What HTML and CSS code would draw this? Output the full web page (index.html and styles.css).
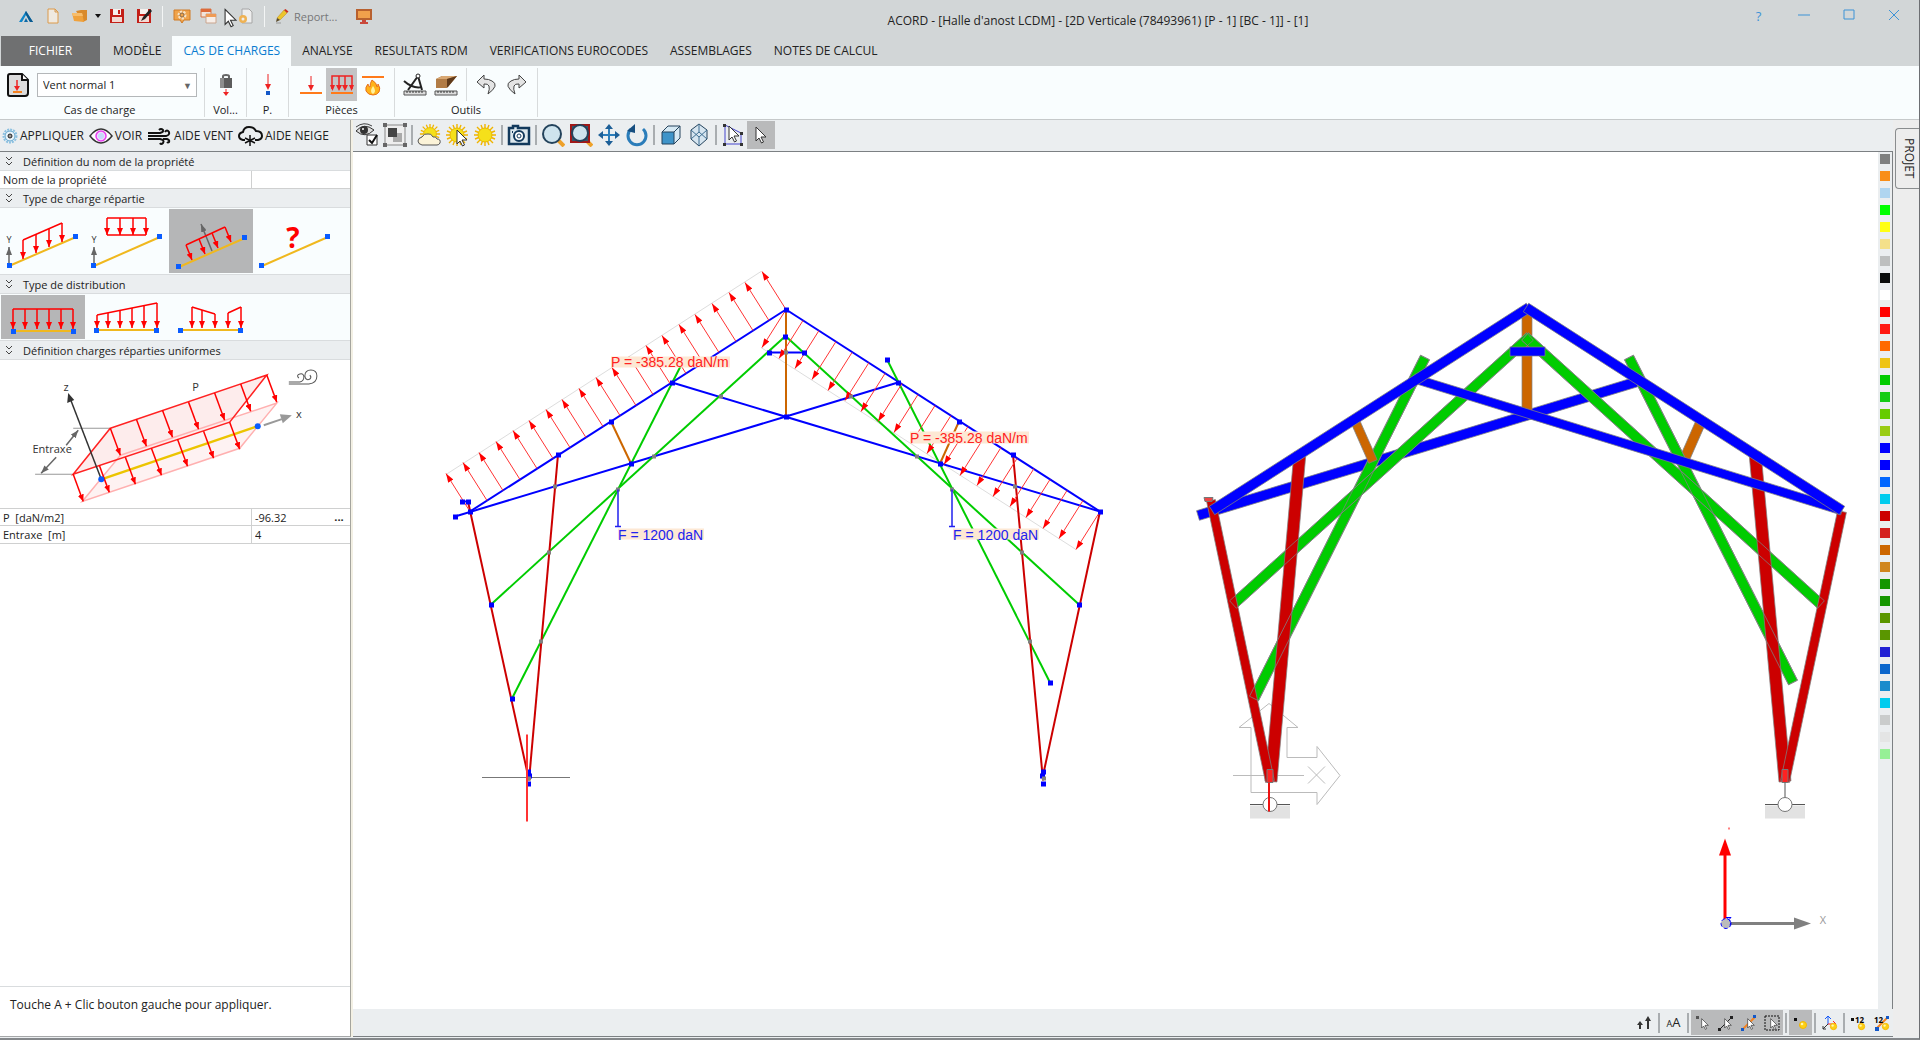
FILE: index.html
```html
<!DOCTYPE html>
<html lang="fr">
<head>
    <meta charset="UTF-8">
    <meta name="viewport" content="width=device-width, initial-scale=1.0">
    <title>ACORD - [Halle d'anost LCDM]</title>
    <link rel="stylesheet" href="styles.css">
</head>
<body>
    <!-- Shared markers and symbols -->
    <svg class="defs" aria-hidden="true">
        <defs>
            <marker id="red-head" viewBox="0 0 7 6" refX="7" refY="3" markerWidth="7" markerHeight="6" markerUnits="userSpaceOnUse" orient="auto"><path d="M0 0L7 3L0 6z" fill="#f00"/></marker>
            <marker id="gray-head" viewBox="0 0 8 6" refX="8" refY="3" markerWidth="8" markerHeight="6" markerUnits="userSpaceOnUse" orient="auto"><path d="M0 0L8 3L0 6z" fill="#666"/></marker>
            <marker id="load-head" viewBox="0 0 9 6" refX="9" refY="3" markerWidth="9" markerHeight="6" markerUnits="userSpaceOnUse" orient="auto"><path d="M0 0L9 3L0 6z" fill="#f00"/></marker>
            <symbol id="sun" viewBox="0 0 24 24">
                <path d="M12 1v22M1 12h22M4 4l16 16M20 4L4 20M8 2l8 20M16 2L8 22M2 8l20 8M2 16l20-8" stroke="#f0b400" stroke-width="1.4"/>
                <circle cx="12" cy="12" r="7" fill="#f5e01a" stroke="#eab800"/>
            </symbol>
            <symbol id="cursor" viewBox="0 0 12 18">
                <path d="M1 1v14l3-3 2.500 5 2-1-2.500-5H11z" fill="#fff" stroke="#333"/>
            </symbol>
            <symbol id="bulb" viewBox="0 0 10 10">
                <circle cx="5" cy="5" r="3.500" fill="#fdd017" stroke="#f5b800"/>
                <circle cx="4" cy="4" r="1.300" fill="#fff6b0"/>
            </symbol>
        </defs>
    </svg>

    <div class="window">
        <header class="titlebar">
            <div class="quick-access">
                <span class="app-logo"><svg width="16" height="16" viewBox="0 0 16 16"><path d="M1 14L8 3l7 11h-3L8 7l-4 7z" fill="#0f86c9"/><path d="M6 14l2-4 2 4z" fill="#0f6ba8"/><path d="M8 3l7 11h-3L7 5z" fill="#0b5a8f"/></svg></span>
                <button type="button" class="qa" aria-label="Nouveau"><svg width="16" height="18" viewBox="0 0 16 18"><path d="M3 2h7l3 3v11H3zM10 2v3h3" fill="#efe9e0" stroke="#dc9a4a"/></svg></button>
                <button type="button" class="qa" aria-label="Ouvrir"><svg width="18" height="16" viewBox="0 0 18 16"><path d="M5 3l5-1 6 0v10l-4 2z" fill="#d98a2b"/><path d="M1 5h10l2 9L3 13z" fill="#f0a23c"/><path d="M1 5h10l1 3H2z" fill="#f7bd6b"/></svg></button>
                <button type="button" class="qa narrow" aria-label="Fichiers récents"><svg width="6" height="4" viewBox="0 0 6 4"><path d="M0 0h6L3 4z" fill="#111"/></svg></button>
                <button type="button" class="qa" aria-label="Enregistrer"><svg width="16" height="16" viewBox="0 0 16 16"><path d="M1 1h14v14H1z" fill="#c32018"/><path d="M4 1h8v6H4z" fill="#f6f1ee"/><path d="M9 2h2v4H9z" fill="#c32018"/><path d="M3 9h10v5H3z" fill="#f3d9d2"/></svg></button>
                <button type="button" class="qa" aria-label="Enregistrer sous"><svg width="16" height="16" viewBox="0 0 16 16"><path d="M1 1h14v14H1z" fill="#c32018"/><path d="M4 1h8v5H4z" fill="#f6f1ee"/><path d="M3 8h10v6H3z" fill="#f3d9d2"/><path d="M14 1l2 2-7 8-4 2 2-4z" fill="#222"/></svg></button>
                <span class="qa-sep"></span>
                <button type="button" class="qa" aria-label="Options"><svg width="18" height="16" viewBox="0 0 18 16"><path d="M1 2h16v10h-6l-2 3-2-3H1z" fill="#f0a34a" stroke="#cf7a26"/><circle cx="9" cy="7" r="3" fill="none" stroke="#f6e3c8" stroke-width="3" stroke-dasharray="2 1"/><circle cx="9" cy="7" r="2" fill="#f0a34a" stroke="#8a6a48"/></svg></button>
                <button type="button" class="qa" aria-label="Fenêtres"><svg width="18" height="16" viewBox="0 0 18 16"><path d="M1 1h10v8H1z" fill="#f2e3da" stroke="#d77746"/><path d="M1 1h10v3H1z" fill="#dd6a3b"/><path d="M6 6h10v9H6z" fill="#f7eee8" stroke="#c9a58f"/><path d="M6 6h10v3H6z" fill="#ef9b55"/></svg></button>
                <button type="button" class="qa page-button" aria-label="Page"><svg width="16" height="18" viewBox="0 0 16 18"><path d="M4 2h7l3 3v11H4z" fill="#eee" stroke="#a6a6a6"/><circle cx="5" cy="12" r="4" fill="#efb253"/><circle cx="5" cy="12" r="1.500" fill="#eee"/></svg></button>
                <span class="qa-sep"></span>
                <button type="button" class="qa report"><svg width="16" height="16" viewBox="0 0 16 16"><path d="M3 10l7-8 3 3-7 7z" fill="#ecc52c" stroke="#b88a1c" stroke-width=".5"/><path d="M10 2l1.500-1 3 2.500L13 5z" fill="#cc3020"/><path d="M3 10l-1 4 4-2z" fill="#5a4a2a"/><path d="M2 15h5" stroke="#999"/></svg>Report...</button>
                <button type="button" class="qa" aria-label="Écran"><svg width="18" height="16" viewBox="0 0 18 16"><path d="M1 1h16v11H1z" fill="#b8612f"/><path d="M3 3h12v7H3z" fill="#f0a04c"/><path d="M7 12h4v2h2v2H5v-2h2z" fill="#c9483a"/></svg></button>
                <svg class="mouse" width="13" height="20" viewBox="0 0 12 18"><use href="#cursor"/></svg>
            </div>
            <h1 class="window-title">ACORD - [Halle d'anost LCDM] - [2D Verticale (78493961) [P - 1] [BC - 1]] - [1]</h1>
            <div class="window-controls">
                <button type="button" aria-label="Aide">?</button>
                <button type="button" aria-label="Réduire"><svg width="12" height="12" viewBox="0 0 12 12"><path d="M0 6h12" stroke="#3d93d6"/></svg></button>
                <button type="button" aria-label="Agrandir"><svg width="12" height="12" viewBox="0 0 12 12"><path d="M1 1h10v9H1z" fill="none" stroke="#3d93d6"/></svg></button>
                <button type="button" aria-label="Fermer"><svg width="12" height="12" viewBox="0 0 12 12"><path d="M1 1l10 10M11 1L1 11" stroke="#3d93d6"/></svg></button>
            </div>
        </header>

        <nav class="tabs">
            <button type="button" class="tab file">FICHIER</button>
            <button type="button" class="tab">MODÈLE</button>
            <button type="button" class="tab active">CAS DE CHARGES</button>
            <button type="button" class="tab">ANALYSE</button>
            <button type="button" class="tab">RESULTATS RDM</button>
            <button type="button" class="tab">VERIFICATIONS EUROCODES</button>
            <button type="button" class="tab">ASSEMBLAGES</button>
            <button type="button" class="tab">NOTES DE CALCUL</button>
        </nav>

        <div class="ribbon">
            <section class="ribbon-group load-case">
                <div class="ribbon-tools">
                    <button type="button" class="tool" aria-label="Cas de charge"><svg width="22" height="24" viewBox="0 0 22 24"><path d="M3 1h12l6 6v13q0 3-3 3H3q-2 0-2-2V3q0-2 2-2z" fill="#dcdcdc" stroke="#111" stroke-width="2"/><path d="M15 1v6h6" fill="#fff" stroke="#111" stroke-width="2"/><path d="M10 7v8" stroke="#e22" stroke-width="1.500"/><path d="M7 13h6l-3 5z" fill="#e22"/><path d="M6 19h9" stroke="#f58220" stroke-width="2"/></svg></button>
                    <span class="select-box"><select aria-label="Cas de charge"><option>Vent normal 1</option></select></span>
                </div>
                <h2>Cas de charge</h2>
            </section>
            <section class="ribbon-group small">
                <div class="ribbon-tools">
                    <button type="button" class="tool" aria-label="Volumique"><svg width="16" height="24" viewBox="0 0 16 24"><path d="M5 6V3q0-1 3-1t3 1v3" fill="none" stroke="#666" stroke-width="2"/><path d="M2 5h12v10H2z" fill="#5c5c5c"/><path d="M2 5h4v10H2z" fill="#8d8d8d"/><path d="M8 16v4" stroke="#e22"/><path d="M5 19h6l-3 4z" fill="#e22"/></svg></button>
                </div>
                <h2>Vol...</h2>
            </section>
            <section class="ribbon-group small">
                <div class="ribbon-tools">
                    <button type="button" class="tool" aria-label="Ponctuelle"><svg width="10" height="24" viewBox="0 0 10 24"><path d="M5 1v12" stroke="#e22"/><path d="M2 11h6l-3 6z" fill="#e22"/><path d="M3 18h4v4H3z" fill="#1458c8"/></svg></button>
                </div>
                <h2>P.</h2>
            </section>
            <section class="ribbon-group pieces">
                <div class="ribbon-tools">
                    <button type="button" class="tool" aria-label="Charge ponctuelle sur pièce"><svg width="24" height="24" viewBox="0 0 24 24"><path d="M12 3v12" stroke="#e22"/><path d="M9 12h6l-3 6z" fill="#e22"/><path d="M1 20h22" stroke="#ff7a1a" stroke-width="2"/></svg></button>
                    <button type="button" class="tool active" aria-label="Charge répartie"><svg width="24" height="24" viewBox="0 0 24 24"><path d="M2 16V3h20v13M9 3v13M15 3v13" fill="none" stroke="#e22" stroke-width="1.500"/><path d="M0 12h5l-2.500 6zM6 12h6l-3 6zM12 12h6l-3 6zM19 12h5l-2.500 6z" fill="#e22"/><path d="M1 20h22" stroke="#ff7a1a" stroke-width="2"/></svg></button>
                    <button type="button" class="tool" aria-label="Incendie"><svg width="24" height="24" viewBox="0 0 24 24"><path d="M1 4h22" stroke="#ff7a1a" stroke-width="2"/><path d="M11 7q5 3 5 7 1 0 1-3 3 4 1 8-2 3-6 3-5 0-7-4-1-4 2-7 0 3 2 3 0-4 2-7z" fill="#ffb31a" stroke="#e8701a"/><path d="M12 13q4 5 0 8-4-2 0-8z" fill="#fff2a0"/></svg></button>
                </div>
                <h2>Pièces</h2>
            </section>
            <section class="ribbon-group tools">
                <div class="ribbon-tools">
                    <button type="button" class="tool" aria-label="Mesurer"><svg width="24" height="24" viewBox="0 0 24 24"><path d="M15 3L5 17M15 3l4 14M1 8q9 8 18 6" fill="none" stroke="#222" stroke-width="2"/><circle cx="15" cy="3" r="2" fill="#fff" stroke="#222"/><path d="M1 18h22v4H1z" fill="#ddd" stroke="#555"/><path d="M4 18v2M7 18v2M10 18v2M13 18v2M16 18v2M19 18v2" stroke="#333"/></svg></button>
                    <button type="button" class="tool" aria-label="Dimensions bois"><svg width="24" height="24" viewBox="0 0 24 24"><path d="M2 6l6-3h15l-9 11H2z" fill="#9c6a3a"/><path d="M2 6h11v9H2z" fill="#b27c46"/><path d="M2 6l6-3h15l-10 3z" fill="#d9a873"/><path d="M13 6l10-3-10 12z" fill="#5f3a1b"/><path d="M1 18h22v4H1z" fill="#ddd" stroke="#555"/><path d="M4 18v2M7 18v2M10 18v2M13 18v2M16 18v2M19 18v2" stroke="#333"/></svg></button>
                    <span class="tool-sep"></span>
                    <button type="button" class="tool" aria-label="Annuler"><svg width="22" height="24" viewBox="0 0 22 24"><path d="M9 2L2 9l7 6v-4q8-1 4 10 12-9 4-13-3-2-8-2z" fill="#e4e4e4" stroke="#444"/></svg></button>
                    <button type="button" class="tool" aria-label="Rétablir"><svg width="22" height="24" viewBox="0 0 22 24"><path d="M13 2l7 7-7 6v-4q-8-1-4 10-12-9-4-13 3-2 8-2z" fill="#e4e4e4" stroke="#444"/></svg></button>
                </div>
                <h2>Outils</h2>
            </section>
        </div>

        <div class="workspace">
            <aside class="sidebar">
                <div class="action-bar">
                    <button type="button"><svg width="16" height="16" viewBox="0 0 16 16"><circle cx="8" cy="8" r="6.500" fill="#eaf4fa" stroke="#8cc0e0" stroke-width="2" stroke-dasharray="2 1"/><circle cx="8" cy="8" r="5" fill="none" stroke="#5ea3cc"/><circle cx="8" cy="8" r="2" fill="#999" stroke="#222"/></svg>APPLIQUER</button>
                    <button type="button"><svg width="24" height="16" viewBox="0 0 24 16"><path d="M1 8q11-14 22 0-11 14-22 0z" fill="#fff" stroke="#333" stroke-width="1.500"/><circle cx="12" cy="8" r="5" fill="#f3d9fb" stroke="#e83ef0" stroke-width="1.500"/><circle cx="12" cy="8" r="3" fill="#c5d9fb"/></svg>VOIR</button>
                    <button type="button"><svg width="25" height="18" viewBox="0 0 25 18"><path d="M1 6h12q4-1 3-3-2-2-4 0M1 9h18q4-1 3-4-2-3-4 0M1 12h12q5 1 3 4-2 2-3 0M16 12h4q3 1 2 3-1 1-2 0" fill="none" stroke="#111" stroke-width="2"/></svg>AIDE VENT</button>
                    <button type="button"><svg width="25" height="20" viewBox="0 0 25 20"><path d="M7 14H5q-4-1-4-4t4-4q1-5 6-5t7 4q6 0 6 5 0 3-4 4h-3" fill="none" stroke="#111" stroke-width="2"/><path d="M12 9v11M7 12l10 5M17 12L7 17" stroke="#111" stroke-width="1.500"/></svg>AIDE NEIGE</button>
                </div>

                <details open>
                    <summary><svg width="8" height="10" viewBox="0 0 8 10"><path d="M1 1l3 3 3-3M1 6l3 3 3-3" fill="none" stroke="#444"/></svg>Définition du nom de la propriété</summary>
                    <div class="prop-row">
                        <label for="prop-name">Nom de la propriété</label>
                        <input type="text" id="prop-name">
                    </div>
                </details>

                <details open>
                    <summary><svg width="8" height="10" viewBox="0 0 8 10"><path d="M1 1l3 3 3-3M1 6l3 3 3-3" fill="none" stroke="#444"/></svg>Type de charge répartie</summary>
                    <div class="tiles">
                        <button type="button" class="tile" aria-label="Charge verticale suivant la pièce"><svg viewBox="0 0 84 64">
                            <path d="M8 57l67-29" class="beam"/>
                            <path d="M8 54V38" class="axis" marker-end="url(#gray-head)"/><text x="8" y="34" class="axis-name">Y</text>
                            <path d="M22 31l39-17" class="load"/>
                            <path d="M22 31v19" class="load arrow"/><path d="M35 25v19" class="load arrow"/><path d="M48 20v18" class="load arrow"/><path d="M61 14v19" class="load arrow"/>
                            <path d="M6 54h5v5H6zM72 25h5v5h-5z" class="node"/></svg></button>
                        <button type="button" class="tile" aria-label="Charge verticale projetée"><svg viewBox="0 0 84 64">
                            <path d="M9 57l66-29" class="beam"/>
                            <path d="M9 54V38" class="axis" marker-end="url(#gray-head)"/><text x="9" y="34" class="axis-name">Y</text>
                            <path d="M22 9h39M22 26h39" class="load"/>
                            <path d="M22 9v17" class="load arrow"/><path d="M35 9v17" class="load arrow"/><path d="M48 9v17" class="load arrow"/><path d="M61 9v17" class="load arrow"/>
                            <path d="M6 54h5v5H6zM72 25h5v5h-5z" class="node"/></svg></button>
                        <button type="button" class="tile active" aria-label="Charge perpendiculaire"><svg viewBox="0 0 84 64">
                            <path d="M10 58l66-29" class="beam"/>
                            <path d="M43 42L32 15" class="axis" marker-end="url(#gray-head)"/>
                            <path d="M17 36l39-18" class="load"/>
                            <path d="M17 36l6 15" class="load arrow"/><path d="M30 30l6 15" class="load arrow"/><path d="M43 24l6 15" class="load arrow"/><path d="M56 18l6 15" class="load arrow"/>
                            <path d="M7 55h5v5H7zM73 26h5v5h-5z" class="node"/></svg></button>
                        <button type="button" class="tile" aria-label="Charge quelconque"><svg viewBox="0 0 84 64">
                            <path d="M9 57l66-29" class="beam"/>
                            <text x="40" y="39" class="question">?</text>
                            <path d="M6 54h5v5H6zM72 25h5v5h-5z" class="node"/></svg></button>
                    </div>
                </details>

                <details open>
                    <summary><svg width="8" height="10" viewBox="0 0 8 10"><path d="M1 1l3 3 3-3M1 6l3 3 3-3" fill="none" stroke="#444"/></svg>Type de distribution</summary>
                    <div class="tiles">
                        <button type="button" class="tile low active" aria-label="Uniforme"><svg viewBox="0 0 84 44">
                            <path d="M12 36h60" class="beam"/><path d="M12 14h60" class="load"/>
                            <path d="M12 14v20" class="load arrow"/><path d="M24 14v20" class="load arrow"/><path d="M36 14v20" class="load arrow"/><path d="M48 14v20" class="load arrow"/><path d="M60 14v20" class="load arrow"/><path d="M72 14v20" class="load arrow"/>
                            <path d="M10 34h5v5h-5zM70 34h5v5h-5z" class="node"/></svg></button>
                        <button type="button" class="tile low" aria-label="Linéaire"><svg viewBox="0 0 84 44">
                            <path d="M12 35h60" class="beam"/><path d="M12 20L72 8" class="load"/>
                            <path d="M12 20v13" class="load arrow"/><path d="M23 18v15" class="load arrow"/><path d="M35 15v18" class="load arrow"/><path d="M47 13v20" class="load arrow"/><path d="M59 11v22" class="load arrow"/><path d="M72 8v25" class="load arrow"/>
                            <path d="M9 33h5v5H9zM69 33h5v5h-5z" class="node"/></svg></button>
                        <button type="button" class="tile low" aria-label="Par morceaux"><svg viewBox="0 0 84 44">
                            <path d="M12 35h60" class="beam"/><path d="M23 12l23 7M59 18l13-6" class="load"/>
                            <path d="M23 12v21" class="load arrow"/><path d="M33 15v18" class="load arrow"/><path d="M46 19v14" class="load arrow"/><path d="M59 18v15" class="load arrow"/><path d="M72 12v21" class="load arrow"/>
                            <path d="M9 33h5v5H9zM69 33h5v5h-5z" class="node"/></svg></button>
                    </div>
                </details>

                <details open>
                    <summary><svg width="8" height="10" viewBox="0 0 8 10"><path d="M1 1l3 3 3-3M1 6l3 3 3-3" fill="none" stroke="#444"/></svg>Définition charges réparties uniformes</summary>
                    <svg class="load-diagram" viewBox="0 360 350 148">
                        <path d="M110 428L266 375L229 422L73 474z" fill="#fdecec"/>
                        <path d="M120 455L276 403L239 448L82 501z" fill="#fdecec" opacity=".7"/>
                        <path d="M120 455L276 403L239 448L82 501z" fill="none" stroke="#ffb0b0" stroke-width="1.500"/>
                        <path d="M101 479L257 426" stroke="#ecc400" stroke-width="2.500"/>
                        <path d="M35 474H73M73 428H110" stroke="#999"/>
                        <path d="M56 457L41 473" class="axis" marker-end="url(#gray-head)"/>
                        <path d="M66 445L78 430" class="axis" marker-end="url(#gray-head)"/>
                        <path d="M110 428L266 375L229 422L73 474z" fill="none" stroke="#f22" stroke-width="1.500"/>
                        <g id="diagram-arrows"></g>
                        <path d="M101 479L69 396" stroke="#333" stroke-width="1.500"/>
                        <path d="M68 393l-1 10 7-3z" fill="#333"/>
                        <path d="M263 425l18-6" stroke="#999" stroke-width="2"/>
                        <path d="M291 415l-12-1 3 9z" fill="#999"/>
                        <circle cx="101" cy="479" r="3" fill="#0a5cff"/>
                        <circle cx="257" cy="426" r="3" fill="#0a5cff"/>
                        <path d="M288 384h20q8-1 8-8 0-6-6-6t-6 6q1 5 5 3 2-2 0-4M288 382h11q4-1 4-5t-4-3-1 4" fill="none" stroke="#555"/>
                        <text x="66" y="391" class="diagram-text">z</text>
                        <text x="195" y="391" class="diagram-text">P</text>
                        <text x="298" y="418" class="diagram-text">x</text>
                        <text x="52" y="453" class="diagram-text">Entraxe</text>
                    </svg>
                    <div class="prop-row">
                        <label for="prop-load">P &nbsp;[daN/m2]</label>
                        <input type="text" id="prop-load" value="-96.32">
                        <button type="button" class="more" aria-label="Modifier P">...</button>
                    </div>
                    <div class="prop-row last">
                        <label for="prop-spacing">Entraxe &nbsp;[m]</label>
                        <input type="text" id="prop-spacing" value="4">
                    </div>
                </details>

                <p class="hint">Touche A + Clic bouton gauche pour appliquer.</p>
            </aside>

            <main class="view">
                <div class="view-bar">
                    <button type="button" class="vb" aria-label="Visibilité"><svg width="24" height="24" viewBox="0 0 24 24"><path d="M1 8q8-9 18-1-9 9-18 1z" fill="#ddd" stroke="#333"/><circle cx="9" cy="7" r="4" fill="#333"/><circle cx="8" cy="6" r="1" fill="#fff"/><path d="M1 4q8-6 16-1" fill="none" stroke="#444"/><path d="M12 12h10v10H12z" fill="#fff" stroke="#333"/><path d="M14 17l3 3 5-8" fill="none" stroke="#111" stroke-width="2"/></svg></button>
                    <button type="button" class="vb" aria-label="Sélection"><svg width="24" height="24" viewBox="0 0 24 24"><path d="M2 2h20v20H2z" fill="#eee" stroke="#888"/><path d="M10 10h9v9h-9z" fill="#aaa"/><path d="M5 5h9v9H5z" fill="#444"/><path d="M0 0h4v4H0zM20 0h4v4h-4zM0 20h4v4H0zM20 20h4v4h-4z" fill="#666"/></svg></button>
                    <span class="bar-sep"></span>
                    <button type="button" class="vb" aria-label="Ombrage"><svg width="24" height="24" viewBox="0 0 24 24"><use href="#sun" width="22" height="22" x="2"/><path d="M5 22q-4-1-4-4t4-4q2-4 6-3 3-1 5 3 3-1 4 2 4 0 3 4-1 2-3 2z" fill="#fbf3d8" stroke="#555"/></svg></button>
                    <button type="button" class="vb" aria-label="Lumière sélection"><svg width="24" height="24" viewBox="0 0 24 24"><use href="#sun" width="24" height="24"/><use href="#cursor" x="11" y="6" width="12" height="18"/></svg></button>
                    <button type="button" class="vb" aria-label="Lumière"><svg width="24" height="24" viewBox="0 0 24 24"><use href="#sun" width="24" height="24"/></svg></button>
                    <span class="bar-sep"></span>
                    <button type="button" class="vb" aria-label="Capture"><svg width="24" height="22" viewBox="0 0 24 22"><path d="M2 4h4V2h5v2h11v16H2z" fill="#dde8ee" stroke="#12395c" stroke-width="2.500"/><circle cx="12" cy="12" r="5" fill="#fff" stroke="#12395c" stroke-width="2"/><circle cx="12" cy="12" r="2" fill="none" stroke="#12395c"/><path d="M5 8h1" stroke="#12395c" stroke-width="2"/></svg></button>
                    <span class="bar-sep"></span>
                    <button type="button" class="vb" aria-label="Zoom"><svg width="24" height="24" viewBox="0 0 24 24"><path d="M17 17l6 6" stroke="#eea12a" stroke-width="4"/><circle cx="11" cy="11" r="9" fill="#cfe4ee" stroke="#24435c" stroke-width="2"/></svg></button>
                    <button type="button" class="vb" aria-label="Zoom fenêtre"><svg width="24" height="24" viewBox="0 0 24 24"><path d="M17 17l6 6" stroke="#eea12a" stroke-width="4"/><path d="M2 2h18v17H2z" fill="#35576c" stroke="#a01818" stroke-width="2"/><circle cx="11" cy="10" r="8" fill="#cfe4ee" stroke="#24435c" stroke-width="2"/></svg></button>
                    <button type="button" class="vb" aria-label="Déplacer"><svg width="24" height="24" viewBox="0 0 24 24"><path d="M12 3v18M3 12h18" stroke="#2b7dba" stroke-width="2"/><path d="M12 1l4 5H8zM12 23l4-5H8zM1 12l5-4v8zM23 12l-5-4v8z" fill="#1d5f97"/></svg></button>
                    <button type="button" class="vb" aria-label="Pivoter"><svg width="24" height="24" viewBox="0 0 24 24"><path d="M6 6A9 9 0 1 0 18 6" fill="none" stroke="#2b7dba" stroke-width="3"/><path d="M2 8L10 1v9z" fill="#164e80"/></svg></button>
                    <span class="bar-sep"></span>
                    <button type="button" class="vb" aria-label="Vue de face"><svg width="22" height="22" viewBox="0 0 22 22"><path d="M2 8l6-6h12v12l-6 6z" fill="#d6e9f4" stroke="#24435c"/><path d="M2 8h12v12H2z" fill="#3f94c9" stroke="#24435c"/><path d="M14 8l6-6" stroke="#24435c"/></svg></button>
                    <button type="button" class="vb" aria-label="Vue isométrique"><svg width="22" height="24" viewBox="0 0 22 24"><path d="M11 1l8 6v9l-8 7-8-7V7z" fill="#d6e5f0" stroke="#24435c"/><path d="M3 7l8 7 8-7M11 14v9M11 1v8M3 16l8-7 8 7" fill="none" stroke="#3f6f92"/></svg></button>
                    <span class="bar-sep"></span>
                    <button type="button" class="vb" aria-label="Sélection polygone"><svg width="24" height="24" viewBox="0 0 24 24"><path d="M4 2v19h16V10z" fill="none" stroke="#44c"/><path d="M2 1h3v3H2zM2 20h3v3H2zM19 20h3v3h-3zM19 9h3v3h-3z" fill="#333"/><use href="#cursor" x="7" y="2" width="12" height="18"/></svg></button>
                    <button type="button" class="vb active" aria-label="Pointeur"><svg width="12" height="18" viewBox="0 0 12 18"><use href="#cursor"/></svg></button>
                </div>

                <div class="stage">
                    <svg class="drawing" viewBox="353 152 1525 856">
                        <!-- Wire model with loads -->
                        <path d="M482 777h88" stroke="#777"/>
                        <path d="M446 474L761 271M761 347L1076 549" class="envelope"/>
                        <g id="wire"></g>
                        <g id="loads"></g>
                        <g id="nodes"></g>
                        <path d="M618 489v37M615 526h6M952 489v37M949 526h6" class="force"/>
                        <path d="M527 734v87" stroke="#f33" stroke-width="2"/>
                        <rect x="611" y="356" width="119" height="11" class="tag"/>
                        <text x="611" y="366" class="load-text">P = -385.28 daN/m</text>
                        <rect x="910" y="431" width="119" height="12" class="tag"/>
                        <text x="910" y="442" class="load-text">P = -385.28 daN/m</text>
                        <rect x="618" y="528" width="86" height="11" class="tag"/>
                        <text x="618" y="539" class="load-text blue">F = 1200 daN</text>
                        <rect x="953" y="528" width="86" height="11" class="tag"/>
                        <text x="953" y="539" class="load-text blue">F = 1200 daN</text>

                        <!-- Solid model -->
                        <path d="M1251 792V727H1239L1269 703L1298 727H1287V757H1317V746L1340 775L1317 804V792zM1233 775H1304M1308 766L1325 783M1325 766L1308 783" class="ucs"/>
                        <g id="solid"></g>
                        <path d="M1204 497h9l-1 4h-7z" fill="#e44" stroke="#777"/>
                        <path d="M1267 769h6v13h-6zM1782 769h6v13h-6z" fill="#f22" stroke="#777"/>
                        <path d="M1250 805h40v13h-40zM1765 805h40v13h-40z" fill="#e2e2e2"/>
                        <path d="M1250 804h40M1765 804h40M1785 782v16" stroke="#555"/>
                        <circle cx="1270" cy="804" r="7" class="hinge"/>
                        <circle cx="1785" cy="804" r="7" class="hinge"/>
                        <path d="M1269 782v29" stroke="#e11" stroke-width="2"/>

                        <!-- Axes -->
                        <path d="M1725 923V852" stroke="#f00" stroke-width="3"/>
                        <path d="M1725 838l6 17h-12z" fill="#f00"/>
                        <path d="M1729 827v2" stroke="#f00"/>
                        <path d="M1725 923h70" stroke="#808080" stroke-width="3"/>
                        <path d="M1811 923l-17-6v12z" fill="#808080"/>
                        <circle cx="1726" cy="923" r="5" fill="#bbb" stroke="#00f" stroke-dasharray="4 2"/>
                        <path d="M1726 917h5l-2 2q3 3 1 6" fill="none" stroke="#00f" stroke-width="1"/>
                        <text x="1823" y="923" class="axis-x">X</text>
                    </svg>
                    <div class="palette" id="palette"></div>
                </div>

                <footer class="status-bar">
                    <button type="button" class="sb" aria-label="Taille flèches"><svg width="16" height="16" viewBox="0 0 16 16"><path d="M3 14V9M11 14V4" stroke="#333" stroke-width="2"/><path d="M0 10h6L3 6zM8 6h6l-3-5z" fill="#333"/></svg></button>
                    <span class="bar-sep"></span>
                    <button type="button" class="sb letters" aria-label="Taille texte"><small>A</small>A</button>
                    <span class="bar-sep"></span>
                    <div class="sb-group">
                        <button type="button" class="sb active" aria-label="Sélection noeuds"><svg width="16" height="16" viewBox="0 0 16 16"><path d="M1 1h3v3H1z" fill="#555"/><use href="#cursor" x="6" y="3" width="8" height="12"/></svg></button>
                        <button type="button" class="sb active" aria-label="Sélection barres"><svg width="16" height="16" viewBox="0 0 16 16"><path d="M1 15L14 2" stroke="#222"/><path d="M0 13h3v3H0zM12 1h3v3h-3z" fill="#222"/><use href="#cursor" x="6" y="3" width="8" height="12"/></svg></button>
                        <button type="button" class="sb active" aria-label="Sélection pièces"><svg width="16" height="16" viewBox="0 0 16 16"><path d="M1 15L14 2" stroke="#f58220" stroke-width="2"/><path d="M0 13h3v3H0zM12 0h3v3h-3z" fill="#1458c8"/><use href="#cursor" x="6" y="3" width="8" height="12"/></svg></button>
                        <button type="button" class="sb active" aria-label="Sélection fenêtre"><svg width="16" height="16" viewBox="0 0 16 16"><path d="M1 1h14v14H1z" fill="none" stroke="#111" stroke-dasharray="2 1"/><use href="#cursor" x="6" y="3" width="8" height="12"/></svg></button>
                    </div>
                    <span class="bar-sep"></span>
                    <button type="button" class="sb active" aria-label="Afficher noeuds"><svg width="16" height="16" viewBox="0 0 16 16"><path d="M1 3h3v3H1z" fill="#111"/><use href="#bulb" x="5" y="5" width="10" height="10"/></svg></button>
                    <span class="bar-sep"></span>
                    <button type="button" class="sb" aria-label="Afficher repères"><svg width="16" height="16" viewBox="0 0 16 16"><path d="M6 9V1M3 4l3-3 3 3" fill="none" stroke="#1458f8"/><path d="M6 9h8M11 6l3 3-3 3" fill="none" stroke="#f22"/><path d="M6 9l-5 5v-3M1 14h3" fill="none" stroke="#333"/><use href="#bulb" x="7" y="7" width="9" height="9"/></svg></button>
                    <span class="bar-sep"></span>
                    <button type="button" class="sb" aria-label="Numéros noeuds"><svg width="16" height="16" viewBox="0 0 16 16"><path d="M0 3h3v3H0z" fill="#111"/><text x="4" y="8" class="num">12</text><use href="#bulb" x="6" y="7" width="9" height="9"/></svg></button>
                    <button type="button" class="sb" aria-label="Numéros barres"><svg width="16" height="16" viewBox="0 0 16 16"><path d="M2 14L14 2" stroke="#f58220" stroke-width="2"/><path d="M1 12h4v4H1zM12 1h3v3h-3z" fill="#1458c8"/><text x="0" y="8" class="num">12</text><use href="#bulb" x="7" y="7" width="9" height="9"/></svg></button>
                </footer>
            </main>

            <div class="side-strip">
                <button type="button" class="project-tab">PROJET</button>
            </div>
        </div>
    </div>
    <script src="script.js"></script>
</body>
</html>
```

FILE: styles.css
```css
* {
    margin: 0;
    padding: 0;
    box-sizing: border-box;
}

body {
    font-family: "Open Sans", "Noto Sans", sans-serif;
    font-size: 11px;
    color: #222;
    background-color: #ebeef0;
}

button,
select,
input {
    font: inherit;
    color: inherit;
    border: none;
    background: none;
}

.defs {
    position: absolute;
    width: 0;
    height: 0;
}

.window {
    display: flex;
    flex-direction: column;
    height: 100vh;
    padding-bottom: 1px;
    border-right: 1px solid #6d6f73;
    border-bottom: 2px solid #85888b;
    overflow: hidden;
}

/* Title bar */
.titlebar {
    display: grid;
    grid-template-columns: 400px 1fr 183px;
    height: 36px;
    padding-bottom: 4px;
    align-items: center;
    background-color: #d2d6d7;
}

.quick-access {
    position: relative;
    display: flex;
    align-items: center;
    padding-left: 12px;
}

.app-logo,
.qa {
    display: flex;
    align-items: center;
    justify-content: center;
    width: 27px;
    height: 24px;
}

.qa.narrow {
    width: 10px;
}

.qa-sep {
    width: 1px;
    height: 21px;
    margin: 0 5px;
    background-color: #f3f5f5;
}

.page-button {
    margin-left: 10px;
}

.qa.report {
    width: auto;
    gap: 4px;
    margin: 0 13px 0 4px;
    color: #777;
}

.mouse {
    position: absolute;
    left: 224px;
    top: 4px;
}

.window-title {
    font-size: 12px;
    font-weight: normal;
    text-align: center;
    padding: 8px 0 0 60px;
}

.window-controls {
    display: flex;
}

.window-controls button {
    width: 45px;
    height: 30px;
    font-size: 13px;
    color: #3d93d6;
}

/* Tabs */
.tabs {
    display: flex;
    height: 30px;
    padding-left: 1px;
    background-color: #d2d6d7;
}

.tab {
    padding: 0 11px 1px;
    font-size: 12px;
}

.tab.file {
    width: 99px;
    margin-right: 2px;
    color: #fff;
    background-color: #6f7071;
}

.tab.active {
    color: #0a7cd0;
    background-color: #f9fdfe;
}

/* Ribbon */
.ribbon {
    display: flex;
    height: 54px;
    background-color: #f9fdfe;
    border-bottom: 1px solid #c6c9ca;
}

.ribbon-group {
    display: flex;
    flex-direction: column;
    align-items: center;
    margin: 2px 0;
    border-right: 1px solid #d8dbdc;
}

.ribbon-group.load-case {
    width: 205px;
    padding-right: 5px;
}

.ribbon-group.small {
    width: 42px;
}

.ribbon-group.pieces {
    width: 106px;
}

.ribbon-group.tools {
    width: 143px;
}

.ribbon-group h2 {
    font-size: 11px;
    font-weight: normal;
    line-height: 18px;
}

.ribbon-tools {
    display: flex;
    align-items: center;
    height: 33px;
}

.tool {
    display: flex;
    align-items: center;
    justify-content: center;
    width: 31px;
    height: 33px;
}

.tool.active {
    background-color: #c3c4c5;
}

.tool-sep {
    width: 1px;
    height: 33px;
    margin: 0 4px;
    background-color: #d8dbdc;
}

.select-box {
    position: relative;
    margin-left: 4px;
}

.select-box select {
    appearance: none;
    width: 160px;
    height: 24px;
    padding: 0 5px;
    background-color: #fff;
    border: 1px solid #b4b7b9;
}

.select-box::after {
    content: "▼";
    position: absolute;
    right: 5px;
    top: 6px;
    font-size: 9px;
    color: #666;
    pointer-events: none;
}

/* Workspace */
.workspace {
    display: flex;
    flex: 1;
    min-height: 0;
}

.sidebar {
    display: flex;
    flex-direction: column;
    flex: 0 0 353px;
    min-width: 0;
    background-color: #fff;
    border-right: 2px solid #f3f0e4;
    box-shadow: inset -1px 0 #a5a59e;
}

.action-bar {
    display: flex;
    align-items: center;
    gap: 5px;
    height: 32px;
    padding-left: 2px;
    background-color: #ebeef0;
    border-bottom: 1px solid #7c8083;
    margin-right: 1px;
}

.action-bar button {
    display: flex;
    align-items: center;
    gap: 2px;
    font-size: 12px;
    white-space: nowrap;
}

summary {
    display: flex;
    align-items: center;
    gap: 10px;
    height: 19px;
    margin-right: 1px;
    padding-left: 5px;
    background-color: #ebeef0;
    border-bottom: 1px solid #d9dcde;
    list-style: none;
}

.prop-row {
    display: flex;
    height: 18px;
    margin-right: 1px;
    border-bottom: 1px solid #cfd0d0;
}

.prop-row label {
    flex: 0 0 252px;
    padding-left: 3px;
    line-height: 17px;
    border-right: 1px solid #cfd0d0;
}

.prop-row input {
    flex: 1;
    min-width: 0;
    padding-left: 3px;
}

.more {
    width: 22px;
    line-height: 8px;
    font-weight: bold;
}

.load-diagram + .prop-row {
    border-top: 1px solid #cfd0d0;
}

.tiles {
    display: flex;
    padding: 1px;
    margin-right: 1px;
    background-color: #f9fdfe;
    border-bottom: 1px solid #d9dcde;
}

.tile {
    width: 84px;
    height: 64px;
}

.tile.low {
    height: 44px;
}

.tile.active {
    background-color: #b5b6b7;
}

.tile svg {
    display: block;
    width: 100%;
}

.beam {
    stroke: #f0b81e;
    stroke-width: 2;
}

.load {
    fill: none;
    stroke: #f00;
    stroke-width: 1.5;
}

.arrow {
    marker-end: url(#red-head);
}

.axis {
    stroke: #666;
    stroke-width: 1.5;
}

.node {
    fill: #0a5cff;
}

.axis-name {
    font-size: 9px;
    text-anchor: middle;
    fill: #333;
}

.question {
    font-size: 28px;
    font-weight: bold;
    text-anchor: middle;
    fill: #f00;
}

.load-diagram {
    display: block;
    width: 100%;
}

.diagram-text {
    font-size: 11px;
    text-anchor: middle;
    fill: #333;
}

.hint {
    margin: auto 1px 0 0;
    height: 51px;
    padding: 9px 10px;
    font-size: 12px;
    border-top: 1px solid #d9dcde;
    border-bottom: 1px solid #a5a7a8;
}

/* View */
.view {
    display: flex;
    flex-direction: column;
    flex: 1;
    min-width: 0;
}

.view-bar {
    display: flex;
    align-items: center;
    height: 32px;
    padding-bottom: 1px;
    border-bottom: 1px solid #7c8083;
}

.vb {
    display: flex;
    align-items: center;
    justify-content: center;
    width: 28px;
    height: 28px;
}

.vb.active,
.sb.active {
    background-color: #b9babb;
}

.bar-sep {
    width: 2px;
    height: 20px;
    margin: 0 2px;
    background-color: #a9adb0;
}

.stage {
    display: flex;
    flex: 1;
    min-height: 0;
    border-right: 1px solid #7c8083;
}

.drawing {
    flex: 1;
    min-width: 0;
    height: 100%;
    background-color: #fff;
}

.palette {
    display: flex;
    flex-direction: column;
    gap: 7px;
    padding: 2px 2px 0;
}

.swatch {
    width: 10px;
    height: 10px;
}

.envelope {
    stroke: #ddd;
}

.member {
    stroke-width: 2;
}

.load-arrow {
    stroke: #f33;
    marker-end: url(#load-head);
}

.force {
    stroke: #22e;
    stroke-width: 1.5;
}

.tag {
    fill: #fde8d4;
}

.load-text {
    font-family: "Liberation Sans", sans-serif;
    font-size: 14px;
    fill: #f22;
}

.load-text.blue {
    fill: #22e;
}

.ucs {
    fill: none;
    stroke: #bbb;
}

.hinge {
    fill: #fff;
    stroke: #777;
}

.outline {
    fill: none;
    stroke: #808080;
    stroke-width: 0.7;
}

.axis-x {
    font-size: 11px;
    text-anchor: middle;
    fill: #999;
}

.status-bar {
    display: flex;
    align-items: center;
    justify-content: flex-end;
    height: 28px;
    border-bottom: 1px solid #7c8083;
}

.sb {
    display: flex;
    align-items: center;
    justify-content: center;
    width: 23px;
    height: 25px;
}

.sb-group {
    display: flex;
}

.letters {
    align-items: baseline;
    line-height: 25px;
    font-size: 13px;
}

.letters small {
    font-size: 9px;
}

.num {
    font-size: 8px;
    font-weight: bold;
}

/* Right strip */
.side-strip {
    flex: 0 0 26px;
    padding: 8px 0 0 2px;
    background-color: #ededed;
}

.project-tab {
    width: 24px;
    height: 61px;
    padding-left: 3px;
    font-size: 12px;
    writing-mode: vertical-rl;
    border: 1px solid #8a8d8f;
    border-right: none;
    border-radius: 4px 0 0 4px;
}
```

FILE: script.js
```js
const SVG_NS = 'http://www.w3.org/2000/svg';

function add(parentId, tag, attrs) {
    const el = document.createElementNS(SVG_NS, tag);
    for (const name in attrs) {
        el.setAttribute(name, attrs[name]);
    }
    document.getElementById(parentId).appendChild(el);
}

const BLUE = '#0000ff';
const GREEN = '#00cc00';
const RED = '#cc0000';
const ORANGE = '#cc6600';

// Wire model: x1, y1, x2, y2, color
const wire = [
    [786, 309, 786, 415, ORANGE],
    [611, 421, 631, 463, ORANGE],
    [959, 421, 940, 463, ORANGE],
    [455, 516, 786, 416, BLUE],
    [786, 416, 898, 382, BLUE],
    [672, 382, 1100, 511, BLUE],
    [470, 511, 786, 309, BLUE],
    [786, 309, 1100, 511, BLUE],
    [769, 352, 804, 352, BLUE],
    [462, 501, 468, 501, BLUE],
    [785, 336, 491, 604, GREEN],
    [786, 336, 1079, 604, GREEN],
    [684, 359, 512, 698, GREEN],
    [887, 359, 1050, 682, GREEN],
    [468, 501, 528, 775, RED],
    [558, 454, 529, 780, RED],
    [1013, 454, 1043, 780, RED],
    [1100, 511, 1043, 775, RED]
];

wire.forEach(([x1, y1, x2, y2, stroke]) => {
    add('wire', 'line', { x1, y1, x2, y2, stroke, class: 'member' });
});

// Evenly spaced arrows along a bar
function arrows(parentId, from, to, count, dx, dy, cls) {
    for (let i = 0; i < count; i++) {
        const t = i / (count - 1);
        const x = Math.round(from[0] + (to[0] - from[0]) * t);
        const y = Math.round(from[1] + (to[1] - from[1]) * t);
        add(parentId, 'path', { d: `M${x} ${y}l${dx} ${dy}`, class: cls });
    }
}

arrows('loads', [470, 511], [786, 309], 20, -24, -38, 'load-arrow');
arrows('loads', [786, 309], [1100, 511], 20, -24, 38, 'load-arrow');
arrows('diagram-arrows', [110, 428], [266, 375], 7, 10, 27, 'load arrow');
arrows('diagram-arrows', [73, 474], [229, 422], 7, 10, 27, 'load arrow');

const ends = [
    [786, 309], [785, 336], [769, 352], [804, 352], [470, 511], [455, 516], [462, 501], [468, 501],
    [558, 454], [611, 421], [631, 463], [672, 382], [786, 416], [887, 359], [898, 382], [959, 421],
    [940, 463], [1013, 454], [1100, 511], [491, 604], [512, 698], [1079, 604], [1050, 682],
    [528, 771], [529, 775], [528, 783], [1043, 771], [1042, 775], [1043, 783]
];
const crossings = [
    [786, 352], [721, 396], [851, 396], [654, 456], [917, 456], [618, 489], [952, 489], [555, 486],
    [1015, 486], [549, 552], [1022, 552], [541, 641], [1030, 641], [529, 778], [1044, 778]
];

ends.forEach(([x, y]) => add('nodes', 'rect', { x: x - 2, y: y - 2, width: 5, height: 5, fill: BLUE }));
crossings.forEach(([x, y]) => add('nodes', 'rect', { x: x - 2, y: y - 2, width: 4, height: 4, fill: '#808080' }));

// Solid model: x1, y1, x2, y2, thickness, color
function bar(x1, y1, x2, y2, size, fill) {
    const length = Math.hypot(x2 - x1, y2 - y1);
    const angle = Math.atan2(y2 - y1, x2 - x1) * 180 / Math.PI;
    add('solid', 'rect', {
        x: 0,
        y: -size / 2,
        width: length,
        height: size,
        transform: `translate(${x1} ${y1}) rotate(${angle})`,
        class: 'outline',
        style: `fill: ${fill}`
    });
}

const greens = [
    [1425, 357, 1254, 698, 10, GREEN],
    [1629, 357, 1793, 682, 10, GREEN],
    [1530, 336, 1233, 604, 10, GREEN],
    [1525, 336, 1821, 604, 10, GREEN]
];

[
    [1198, 515, 1641, 380, 10, BLUE],
    [1527, 309, 1527, 410, 10, ORANGE],
    [1701, 421, 1683, 462, 10, ORANGE],
    ...greens,
    [1300, 452, 1271, 781, 12, RED],
    [1755, 452, 1785, 781, 12, RED],
    [1211, 500, 1270, 781, 9, RED],
    [1842, 511, 1785, 781, 9, RED],
    ...greens.map(g => [...g.slice(0, 5), 'none']),
    [1354, 418, 1373, 461, 9, ORANGE],
    [1414, 378, 1842, 510, 9, BLUE],
    [1212, 510, 1529, 307, 10, BLUE],
    [1526, 307, 1842, 510, 10, BLUE],
    [1510, 351, 1545, 351, 9, BLUE]
].forEach(b => bar(...b));

// Colour palette
const colors = [
    '#7f8080', '#f98e18', '#afd5f0', '#00ff00', '#ffff14', '#f4e08a', '#bdbfbf', '#0a0c0c', '#ffffff',
    '#ff0000', '#ff1a14', '#ff6a00', '#eec414', '#00cc00', '#14cc14', '#66cc00', '#99cc14', '#0000ff',
    '#0000ff', '#0066ff', '#00ccee', '#cc0000', '#d42020', '#cc6600', '#d08620', '#149600', '#149600',
    '#5a9600', '#5a9600', '#2020d4', '#0a66cc', '#1a8ccc', '#00ccee', '#cacccc', '#e4e5e5', '#96f096'
];

const palette = document.getElementById('palette');
colors.forEach(color => {
    const swatch = document.createElement('span');
    swatch.className = 'swatch';
    swatch.style.backgroundColor = color;
    palette.appendChild(swatch);
});
```
